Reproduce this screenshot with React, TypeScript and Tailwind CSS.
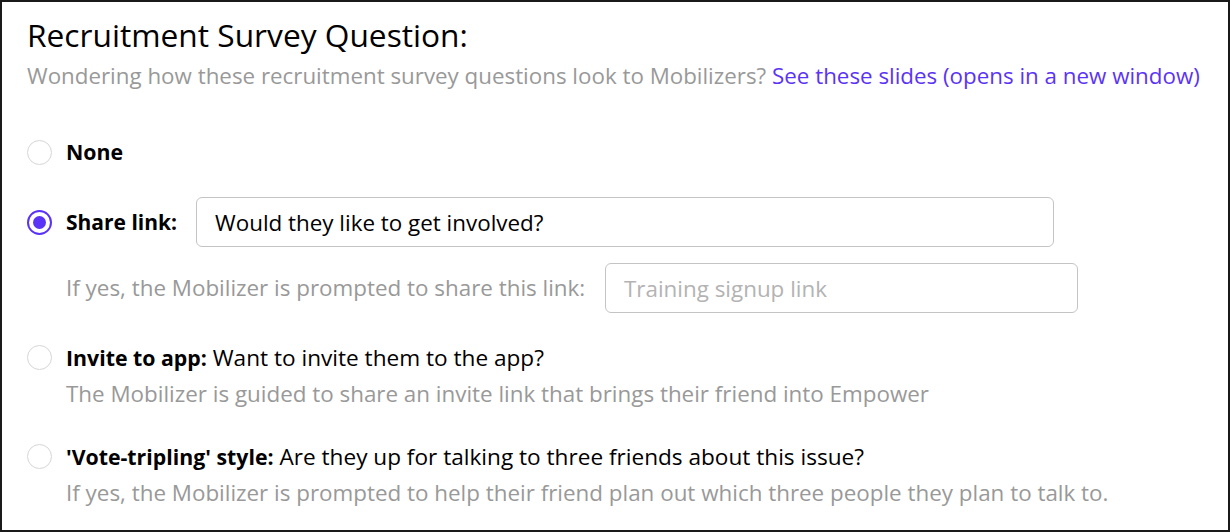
import React, { useState } from 'react';

type Option = 'none' | 'share' | 'invite' | 'vote';

const Radio = ({ checked, onClick }: { checked: boolean; onClick: () => void }) => (
  <button
    type="button"
    onClick={onClick}
    className={
      checked
        ? 'flex h-[25px] w-[25px] shrink-0 items-center justify-center rounded-full border-2 border-[#5b33f6] bg-white'
        : 'flex h-[25px] w-[25px] shrink-0 items-center justify-center rounded-full border border-[#d6d6d6] bg-white'
    }
  >
    {checked && <span className="h-[13px] w-[13px] rounded-full bg-[#5b33f6]" />}
  </button>
);

export default function App() {
  const [selected, setSelected] = useState<Option>('share');
  const [question, setQuestion] = useState('Would they like to get involved?');
  const [link, setLink] = useState('');

  return (
    <div className="h-[532px] w-[1230px] bg-white font-['Open_Sans',sans-serif] text-black">
      <div className="h-full w-full border-2 border-[#1a1a1a] px-[25px] pt-[11px]">
        <h2 className="text-[31.7px] leading-[44px] font-normal">Recruitment Survey Question:</h2>
        <p className="mt-[3px] text-[22.35px] leading-[32px] whitespace-nowrap text-[#999999]">
          Wondering how these recruitment survey questions look to Mobilizers?{' '}
          <a href="#" className="text-[#5b33f6]">See these slides (opens in a new window)</a>
        </p>

        <div className="mt-[45px] flex items-center gap-[14px]">
          <Radio checked={selected === 'none'} onClick={() => setSelected('none')} />
          <span className="text-[21.3px] leading-[30px] font-bold">None</span>
        </div>

        <div className="mt-[30px] flex items-center gap-[14px]">
          <Radio checked={selected === 'share'} onClick={() => setSelected('share')} />
          <span className="w-[116px] text-[21px] leading-[30px] font-bold whitespace-nowrap">Share link:</span>
          <input
            value={question}
            onChange={(e) => setQuestion(e.target.value)}
            className="h-[50px] w-[858px] rounded-[6px] border border-[#c4c4c4] px-[18px] text-[22.4px] outline-none"
          />
        </div>
        <div className="mt-[16px] ml-[39px] flex items-center">
          <span className="w-[539px] text-[22.4px] leading-[30px] whitespace-nowrap text-[#999999]">
            If yes, the Mobilizer is prompted to share this link:
          </span>
          <input
            value={link}
            onChange={(e) => setLink(e.target.value)}
            placeholder="Training signup link"
            className="h-[50px] w-[473px] rounded-[6px] border border-[#c4c4c4] px-[18px] text-[22.4px] outline-none placeholder:text-[#b3b3b3]"
          />
        </div>

        <div className="mt-[30px] flex items-start gap-[14px]">
          <div className="pt-[2px]">
            <Radio checked={selected === 'invite'} onClick={() => setSelected('invite')} />
          </div>
          <div>
            <p className="text-[22.6px] leading-[30px]">
              <span className="text-[21.3px] font-bold">Invite to app:</span> Want to invite them to the app?
            </p>
            <p className="mt-[6px] text-[22.4px] leading-[30px] text-[#999999]">
              The Mobilizer is guided to share an invite link that brings their friend into Empower
            </p>
          </div>
        </div>

        <div className="mt-[33px] flex items-start gap-[14px]">
          <div className="pt-[2px]">
            <Radio checked={selected === 'vote'} onClick={() => setSelected('vote')} />
          </div>
          <div>
            <p className="text-[22.6px] leading-[30px]">
              <span className="text-[21.3px] font-bold">'Vote-tripling' style:</span> Are they up for talking to three friends about this issue?
            </p>
            <p className="mt-[6px] text-[22.4px] leading-[30px] whitespace-nowrap text-[#999999]">
              If yes, the Mobilizer is prompted to help their friend plan out which three people they plan to talk to.
            </p>
          </div>
        </div>
      </div>
    </div>
  );
}
